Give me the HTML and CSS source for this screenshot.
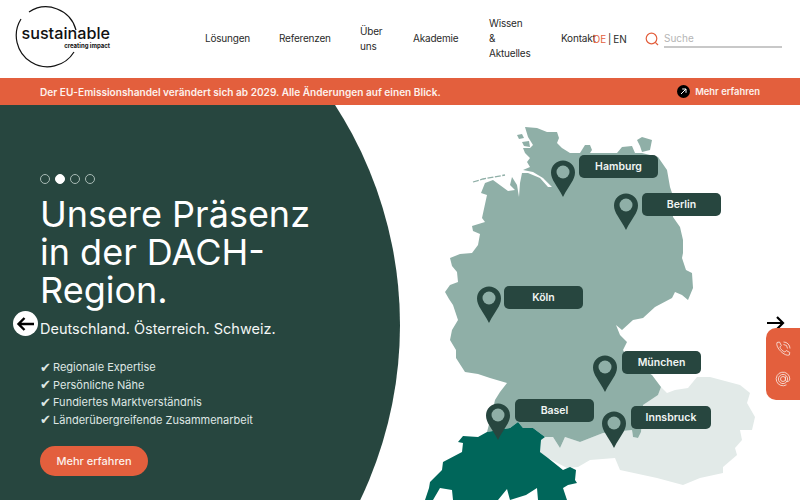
FILE: index.html
```html
<!DOCTYPE html>
<html lang="de">
<head>
<meta charset="utf-8">
<title>Sustainable</title>
<link rel="stylesheet" href="styles.css">
</head>
<body>
<header class="header">
  <a class="logo">
    <svg class="logo-ring" width="70" height="70" viewBox="0 0 70 70"><path d="M7 13A31 31 0 1 0 60 46M62 24A31 31 0 0 0 15 6" fill="none" stroke="#111" stroke-width="1.200"/></svg>
    <span class="logo-name">sustainable</span>
    <span class="logo-tag">creating impact</span>
  </a>
  <nav class="nav">
    <a class="nav-item w-loes">Lösungen</a>
    <a class="nav-item w-ref">Referenzen</a>
    <a class="nav-item w-ueber">Über uns</a>
    <a class="nav-item w-aka">Akademie</a>
    <a class="nav-item w-wissen">Wissen &amp; Aktuelles</a>
    <a class="nav-item w-kontakt">Kontakt</a>
  </nav>
  <div class="lang"><span class="lang-on">DE</span> | EN</div>
  <div class="search">
    <svg width="14" height="14" viewBox="0 0 14 14"><circle cx="6.500" cy="6.500" r="5.300" fill="none" stroke="#e35f3d" stroke-width="1.200"/><path d="M10.300 10.300L13 13" stroke="#e35f3d" stroke-width="1.200"/></svg>
    <input class="search-input" placeholder="Suche">
  </div>
</header>
<div class="banner">
  <span class="banner-text">Der EU-Emissionshandel verändert sich ab 2029. Alle Änderungen auf einen Blick.</span>
  <a class="banner-link">
    <svg width="13" height="13" viewBox="0 0 13 13"><circle cx="6.500" cy="6.500" r="6.500" fill="#000"/><path d="M4 9L9 4M5.200 4H9V7.800" fill="none" stroke="#fff" stroke-width="1"/></svg>
    Mehr erfahren
  </a>
</div>
<main class="hero">
  <div class="blob"></div>
  <svg class="map" width="800" height="395" viewBox="0 105 800 395">
    <path fill="#e2eae8" d="M541 440L545 437L553 437L560 448L565 437L580 442L603 433L632 430L633 437L638 438L641 432L643 405L658 395L661 387L667 393L675 390L688 388L697 377L710 377L740 385L750 393L747 403L755 417L752 430L740 430L742 440L735 448L737 455L723 467L723 473L700 478L683 485L657 478L620 470L615 458L590 460L578 467L567 468L548 458L540 452Z"/>
    <path fill="#8fafa7" d="M525 127L537 128L547 132L557 132L559 138L557 143L562 148L570 153L580 153L585 145L590 145L592 150L590 153L617 153L622 147L632 146L635 153L642 153L658 157L667 170L670 187L672 193L673 217L680 227L683 240L683 253L682 258L686 270L692 273L693 288L688 300L682 295L675 292L672 298L655 307L643 318L633 320L622 330L616 325L620 335L627 342L623 350L630 362L652 375L661 387L658 395L643 405L641 432L638 438L633 437L632 430L603 433L580 442L565 437L560 448L553 437L545 437L533 428L523 428L518 422L510 428L487 432L492 413L495 400L500 392L507 383L490 378L478 374L465 372L456 358L456 350L450 340L452 330L458 320L453 305L449 299L445 292L450 285L458 282L457 272L452 266L450 258L460 254L472 253L478 245L480 234L473 231L472 226L485 222L482 218L487 195L481 193L485 183L493 180L508 191L515 190L510 185L512 177L517 185L519 197L520 183L522 173L528 173L540 178L548 187L552 187L543 178L533 172L523 170L530 167L527 162L530 158L525 153L523 148L530 148L533 145L528 137Z"/>
    <g fill="#8fafa7">
      <path d="M637 140L642 137L652 140L650 150L642 152L640 146Z"/>
      <path d="M517 135L522 134L524 138L519 139Z"/>
      <path d="M522 142L529 141L530 147L524 146Z"/>
    </g>
    <path d="M473 182L483 179L505 175" fill="none" stroke="#8fafa7" stroke-width="1.300" stroke-dasharray="6 1.500"/>
    <path fill="#00665a" d="M458 442L463 436L478 437L487 432L510 428L518 422L523 428L533 428L545 437L541 440L540 452L548 458L563 470L570 467L576 470L575 480L577 483L568 485L563 488L567 500L538 500L537 488L526 495L510 500L507 489L498 500L453 500L452 490L440 488L433 500L425 500L429 488L430 482L442 470L443 462L462 452L463 443Z"/>
    <g fill="#27463f">
      <path d="M563 197C557 185 551 180 551 172.500A12 12 0 0 1 575 172.500C575 180 569 185 563 197Z"/>
      <path d="M626 230C620 218 614 213 614 205.500A12 12 0 0 1 638 205.500C638 213 632 218 626 230Z"/>
      <path d="M489 323C483 311 477 306 477 298.500A12 12 0 0 1 501 298.500C501 306 495 311 489 323Z"/>
      <path d="M605 392C599 380 593 375 593 367.500A12 12 0 0 1 617 367.500C617 375 611 380 605 392Z"/>
      <path d="M498 440C492 428 486 423 486 415.500A12 12 0 0 1 510 415.500C510 423 504 428 498 440Z"/>
      <path d="M614 448C608 436 602 431 602 423.500A12 12 0 0 1 626 423.500C626 431 620 436 614 448Z"/>
    </g>
    <g fill="#8fafa7">
      <circle cx="563" cy="172" r="6.500"/><circle cx="626" cy="205" r="6.500"/><circle cx="489" cy="298" r="6.500"/>
      <circle cx="605" cy="367" r="6.500"/><circle cx="498" cy="415" r="6.500"/><circle cx="614" cy="423" r="6.500"/>
    </g>
  </svg>
  <span class="tag tag-hamburg">Hamburg</span>
  <span class="tag tag-berlin">Berlin</span>
  <span class="tag tag-koeln">Köln</span>
  <span class="tag tag-muenchen">München</span>
  <span class="tag tag-basel">Basel</span>
  <span class="tag tag-innsbruck">Innsbruck</span>

  <div class="content">
    <div class="dots"><i class="dot"></i><i class="dot dot-on"></i><i class="dot"></i><i class="dot"></i></div>
    <h1 class="title">Unsere Präsenz in der DACH-Region.</h1>
    <p class="sub">Deutschland. Österreich. Schweiz.</p>
    <ul class="list">
      <li class="list-item"><span class="check">✔</span>Regionale Expertise</li>
      <li class="list-item"><span class="check">✔</span>Persönliche Nähe</li>
      <li class="list-item"><span class="check">✔</span>Fundiertes Marktverständnis</li>
      <li class="list-item"><span class="check">✔</span>Länderübergreifende Zusammenarbeit</li>
    </ul>
    <a class="btn">Mehr erfahren</a>
  </div>

  <button class="arrow-left" aria-label="Zurück">
    <svg width="18" height="14" viewBox="0 0 18 14"><path d="M18 7H2.500M8.500 1L2.500 7L8.500 13" fill="none" stroke="#000" stroke-width="2.400"/></svg>
  </button>
  <svg class="arrow-right" width="18" height="14" viewBox="0 0 18 14"><path d="M0 7H16M10 1L16 7L10 13" fill="none" stroke="#000" stroke-width="2.200"/></svg>
  <aside class="contact">
    <svg width="16" height="16" viewBox="0 0 16 16" fill="none" stroke="#f6ddd5" stroke-width=".9"><path d="M2 1.500L4.500 1L6.300 4.500L4.800 6C5.500 8 7.500 10.200 9.800 11L11.300 9.500L14.800 11.500L14.300 14C10 16 0 6.500 2 1.500Z"/><path d="M8.500 3.500A4 4 0 0 1 12.500 7.500M8.500 1A6.500 6.500 0 0 1 15 7.500"/></svg>
    <svg width="16" height="16" viewBox="0 0 16 16" fill="none" stroke="#f6ddd5" stroke-width=".9"><circle cx="8" cy="8" r="2.500"/><path d="M10.500 5.500V9C10.500 11.500 14.800 11 14.800 8A6.800 6.800 0 1 0 11.500 13.800"/><circle cx="8" cy="8" r="4.600"/></svg>
  </aside>
</main>
</body>
</html>
```

FILE: styles.css
```css
* { box-sizing: border-box; }
html, body { margin: 0; height: 500px; overflow: hidden; background: #fff; }
body { font-family: "Inter", "Liberation Sans", sans-serif; color: #222; }

.header { height: 78px; display: flex; align-items: center; padding-left: 16px; background: #fff; }
.logo { position: relative; display: flex; flex-direction: column; align-items: flex-end; width: 94px; height: 78px; padding-top: 23px; color: #111; }
.logo-ring { position: absolute; left: -2px; top: 6px; }
.logo-name { font-size: 16.200px; font-weight: 500; line-height: 20px; }
.logo-tag { font-size: 6px; font-weight: 700; line-height: 6px; }

.nav { display: flex; align-items: center; margin: 0 0 1px 95px; font-size: 10px; line-height: 15px; letter-spacing: -.2px; }
.nav-item { display: block; color: #2a2a2a; }
.w-loes { width: 74px; }
.w-ref { width: 81px; }
.w-ueber { width: 53px; padding-right: 26px; }
.w-aka { width: 76px; }
.w-wissen { width: 72px; padding-right: 30px; }
.w-kontakt { width: 32px; white-space: nowrap; }

.lang { font-size: 10px; color: #2a2a2a; white-space: nowrap; width: 53px; word-spacing: -1px; }
.lang-on { color: #e35f3d; }
.search { display: flex; align-items: center; gap: 5px; margin-left: -1px; }
.search-input { width: 118px; height: 18px; border: 0; border-bottom: 2px solid #c8c8c8; padding: 0; font: 10px "Inter", sans-serif; outline: 0; background: transparent; }
.search-input::placeholder { color: #b5b5b5; }

.banner { height: 27px; background: #e35f3d; color: #fdf1ec; display: flex; align-items: center; justify-content: space-between; padding: 0 40px; font-size: 10.100px; font-weight: 600; }
.banner-link { display: flex; align-items: center; gap: 5px; font-size: 9.400px; }

.hero { position: relative; height: 395px; overflow: hidden; background: #fff; }
.blob { position: absolute; left: -410px; top: -185px; width: 810px; height: 810px; border-radius: 50%; background: #27463f; }
.map { position: absolute; left: 0; top: 0; }

.tag { position: absolute; width: 79px; height: 23px; padding-bottom: 1px; border-radius: 5px; background: #27463f; color: #f1f5f3; display: flex; align-items: center; justify-content: center; font-size: 10.500px; font-weight: 600; }
.tag-hamburg { left: 579px; top: 50px; }
.tag-berlin { left: 642px; top: 88px; }
.tag-koeln { left: 504px; top: 181px; }
.tag-muenchen { left: 622px; top: 246px; }
.tag-basel { left: 515px; top: 294px; }
.tag-innsbruck { left: 631px; top: 301px; width: 80px; }

.content { position: relative; padding: 69px 0 0 40px; width: 320px; color: #fff; }
.dots { display: flex; gap: 5px; height: 10px; }
.dot { width: 10px; height: 10px; border-radius: 50%; border: 1px solid #a9bbb6; }
.dot-on { background: #fff; border-color: #fff; }
.title { margin: 11px 0 0; font-size: 36px; font-weight: 400; line-height: 38px; }
.sub { margin: 10px 0 0; font-size: 14.500px; line-height: 20px; color: #f3f6f5; }
.list { list-style: none; margin: 20px 0 0; padding: 0; font-size: 11px; line-height: 17.500px; color: #dfe7e4; }
.list-item { display: flex; align-items: center; height: 17.500px; }
.check { flex: none; width: 13px; font-size: 12.500px; line-height: 1; }
.btn { display: flex; align-items: center; justify-content: center; width: 108px; height: 30px; margin-top: 17px; border-radius: 15px; background: #e35f3d; color: #fdf1ec; font-size: 11px; font-weight: 500; }

.arrow-left { position: absolute; left: 12.500px; top: 206px; width: 25px; height: 25px; padding: 0; border: 0; border-radius: 50%; background: #fff; display: flex; align-items: center; justify-content: center; }
.arrow-right { position: absolute; left: 767px; top: 211px; }
.contact { position: absolute; right: 0; top: 223px; width: 34px; height: 72px; padding: 13px 0 0 9px; border-radius: 10px 0 0 10px; background: #e35f3d; display: flex; flex-direction: column; gap: 14px; }
```
